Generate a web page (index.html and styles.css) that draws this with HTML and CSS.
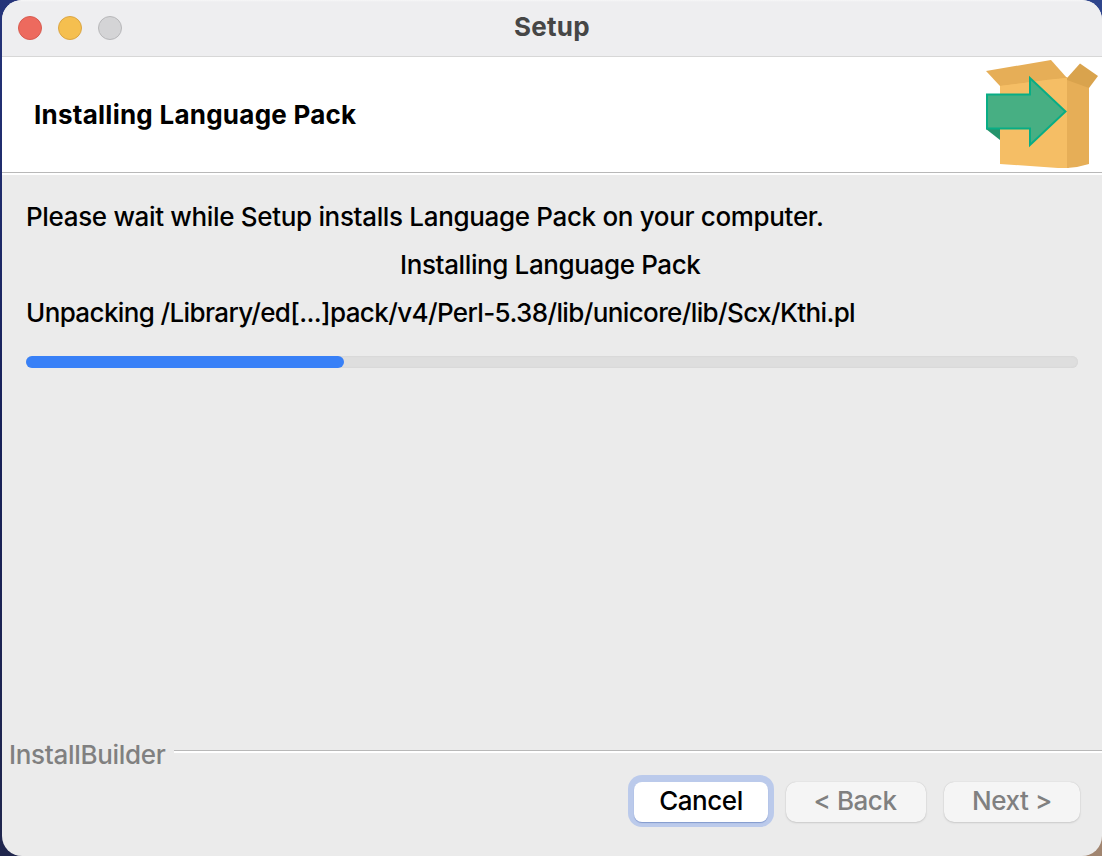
FILE: index.html
```html
<!DOCTYPE html>
<html lang="en">
<head>
<meta charset="utf-8">
<title>Setup</title>
<link rel="stylesheet" href="styles.css">
</head>
<body>
<main class="window">
  <header class="titlebar">
    <div class="controls"><span class="dot close"></span><span class="dot minimize"></span><span class="dot zoom"></span></div>
    <h1 class="title">Setup</h1>
  </header>
  <section class="banner">
    <h2 class="heading">Installing Language Pack</h2>
    <svg class="box" width="116" height="114" viewBox="0 0 116 114" aria-hidden="true">
      <path fill="#f5be65" d="M14 27 81 19 83 24V110H72L14 106Z"/>
      <path fill="#e6ae57" d="M81 20 103 28V106L91 109 81 110Z"/>
      <path fill="#e6ae57" d="M0 13 65 2 81 20 14 28Z"/>
      <path fill="#f5be65" d="M14 28 64 21.5 81 20V30H14Z"/>
      <path fill="#d9a34d" d="M81 20 94 5.5 112 18 103 30 81 22Z"/>
      <path fill="#24946b" d="M0 71H14V82Z"/>
      <path fill="#47af83" stroke="#08ad85" stroke-width="2" d="M1 36.5H44V20L79.5 53.5 44 87V70.5H1Z"/>
    </svg>
  </section>
  <section class="content">
    <p class="line intro">Please wait while Setup installs Language Pack on your computer.</p>
    <p class="line task">Installing Language Pack</p>
    <p class="line file">Unpacking /Library/ed[...]pack/v4/Perl-5.38/lib/unicore/lib/Scx/Kthi.pl</p>
    <div class="progress"><div class="fill"></div></div>
  </section>
  <footer class="footer">
    <div class="brand"><span class="brand-name">InstallBuilder</span><span class="rule"></span></div>
    <div class="actions">
      <button class="button cancel">Cancel</button>
      <button class="button back" disabled>&lt; Back</button>
      <button class="button next" disabled>Next &gt;</button>
    </div>
  </footer>
</main>
</body>
</html>
```
FILE: styles.css
```css
* { box-sizing: border-box; }
body {
  margin: 0;
  height: 856px;
  padding-left: 2px;
  overflow: hidden;
  background: linear-gradient(#25347a, #172058 50%, #20264d) left / 50% 100% no-repeat,
    linear-gradient(#2f458c 50%, #a18570 50%);
  font-family: Inter, "Liberation Sans", sans-serif;
  font-size: 26px;
  color: #000;
}
h1, h2, p { margin: 0; }
.window {
  display: flex;
  flex-direction: column;
  height: 856px;
  border-radius: 20px;
  overflow: hidden;
  background: #ebebeb;
}
.titlebar {
  display: grid;
  grid-template-columns: 1fr auto 1fr;
  align-items: center;
  height: 57px;
  padding: 0 16px;
  background: linear-gradient(#f7f7f7, #eeeef0 2px);
  border-bottom: 1px solid #d7d7d7;
}
.controls { display: flex; gap: 16px; }
.dot { width: 24px; height: 24px; border-radius: 50%; border: 1px solid; }
.close { background: #ed6a5e; border-color: #d75b50; }
.minimize { background: #f5bf4f; border-color: #daa544; }
.zoom { background: #d4d4d6; border-color: #b7b7b9; }
.title { padding-bottom: 3px; font-size: 26px; font-weight: 700; color: #464646; letter-spacing: .3px; }
.banner {
  display: flex;
  justify-content: space-between;
  height: 118px;
  padding: 1px 0 0 32px;
  background: linear-gradient(#fff 115px, #b8b8b8 115px, #b8b8b8 116px, #fff 116px);
}
.heading { padding-top: 41px; font-size: 26px; line-height: 32px; font-weight: 700; letter-spacing: .25px; }
.box { display: block; }
.content { flex: 1; padding: 26px 24px 0; }
.line { width: max-content; height: 48px; line-height: 32px; font-weight: 450; white-space: nowrap; }
.intro { letter-spacing: -.335px; }
.task { margin-left: 374px; letter-spacing: -.38px; }
.file { letter-spacing: -.62px; }
.progress {
  height: 12px;
  margin-top: 11px;
  border-radius: 6px;
  background: #dedede;
  box-shadow: inset 0 0 2px #cecece;
}
.fill { width: 318px; height: 12px; border-radius: 6px; background: #3880f7; }
.footer { height: 118px; }
.brand { display: flex; height: 34px; padding-left: 7px; }
.brand-name { width: 165px; line-height: 34px; color: #808080; letter-spacing: -.3px; font-weight: 450; }
.rule { flex: 1; height: 3px; margin-top: 12px; border-top: 1px solid #b8b8b8; background: #fff; }
.actions { display: flex; justify-content: flex-end; padding: 10px 22px 0; }
.button {
  height: 40px;
  padding: 0 0 4px;
  border: 0;
  border-radius: 10px;
  background: #f5f5f5;
  box-shadow: 0 0 1px #bbb, 0 1px 2px #ccc;
  font: 450 26px Inter, "Liberation Sans", sans-serif;
  letter-spacing: -.45px;
  color: #808080;
}
.cancel {
  width: 134px;
  margin-right: 18px;
  color: #000;
  background: #fff;
  border-radius: 8px;
  box-shadow: 0 1px 1px #8299cd, 0 -1px 0 6px #bbcaeb;
}
.back { width: 140px; margin-right: 18px; padding-right: 2px; }
.next { width: 136px; }
```
